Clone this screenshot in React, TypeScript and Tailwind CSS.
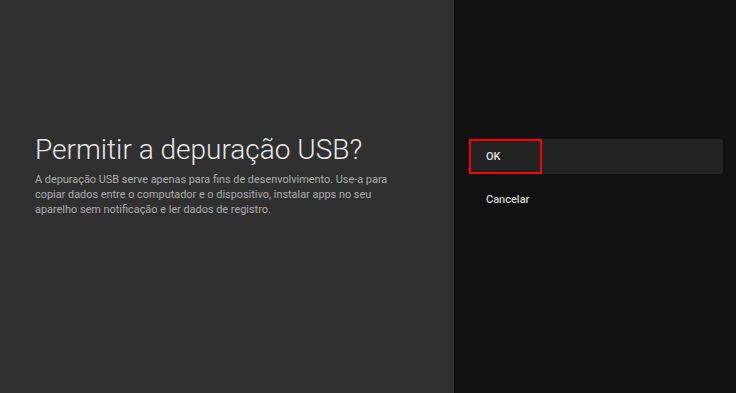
export default function App() {
  return (
    <div className="flex h-[393px] w-[736px] overflow-hidden" style={{ fontFamily: 'Roboto, "Liberation Sans", sans-serif' }}>
      <section className="w-[454px] bg-[#303030] pl-[35px] pr-4 pt-[134px]">
        <h1 className="text-[28px] font-light leading-[32px] text-[#e8e8e8]">Permitir a depuração USB?</h1>
        <p className="mt-[6px] w-[372px] text-[10.9px] leading-[15px] text-[#adadad]">
          A depuração USB serve apenas para fins de desenvolvimento. Use-a para copiar dados entre o computador e o dispositivo, instalar apps no seu aparelho sem notificação e ler dados de registro.
        </p>
      </section>
      <section className="flex flex-1 flex-col gap-[8px] bg-[#111111] pl-[15px] pr-[13px] pt-[139px]">
        <div className="relative flex h-[35px] items-center rounded-[3px] bg-[#222222] pl-[17px] pt-[1px] text-[11px] font-medium text-[#e0e0e0]">
          OK
          <div className="absolute left-0 top-0 h-[35px] w-[73px] border-2 border-[#ff0000]" />
        </div>
        <div className="flex h-[35px] items-center pl-[17px] pt-[1px] text-[11px] font-medium text-[#d2d2d2]">Cancelar</div>
      </section>
    </div>
  );
}
